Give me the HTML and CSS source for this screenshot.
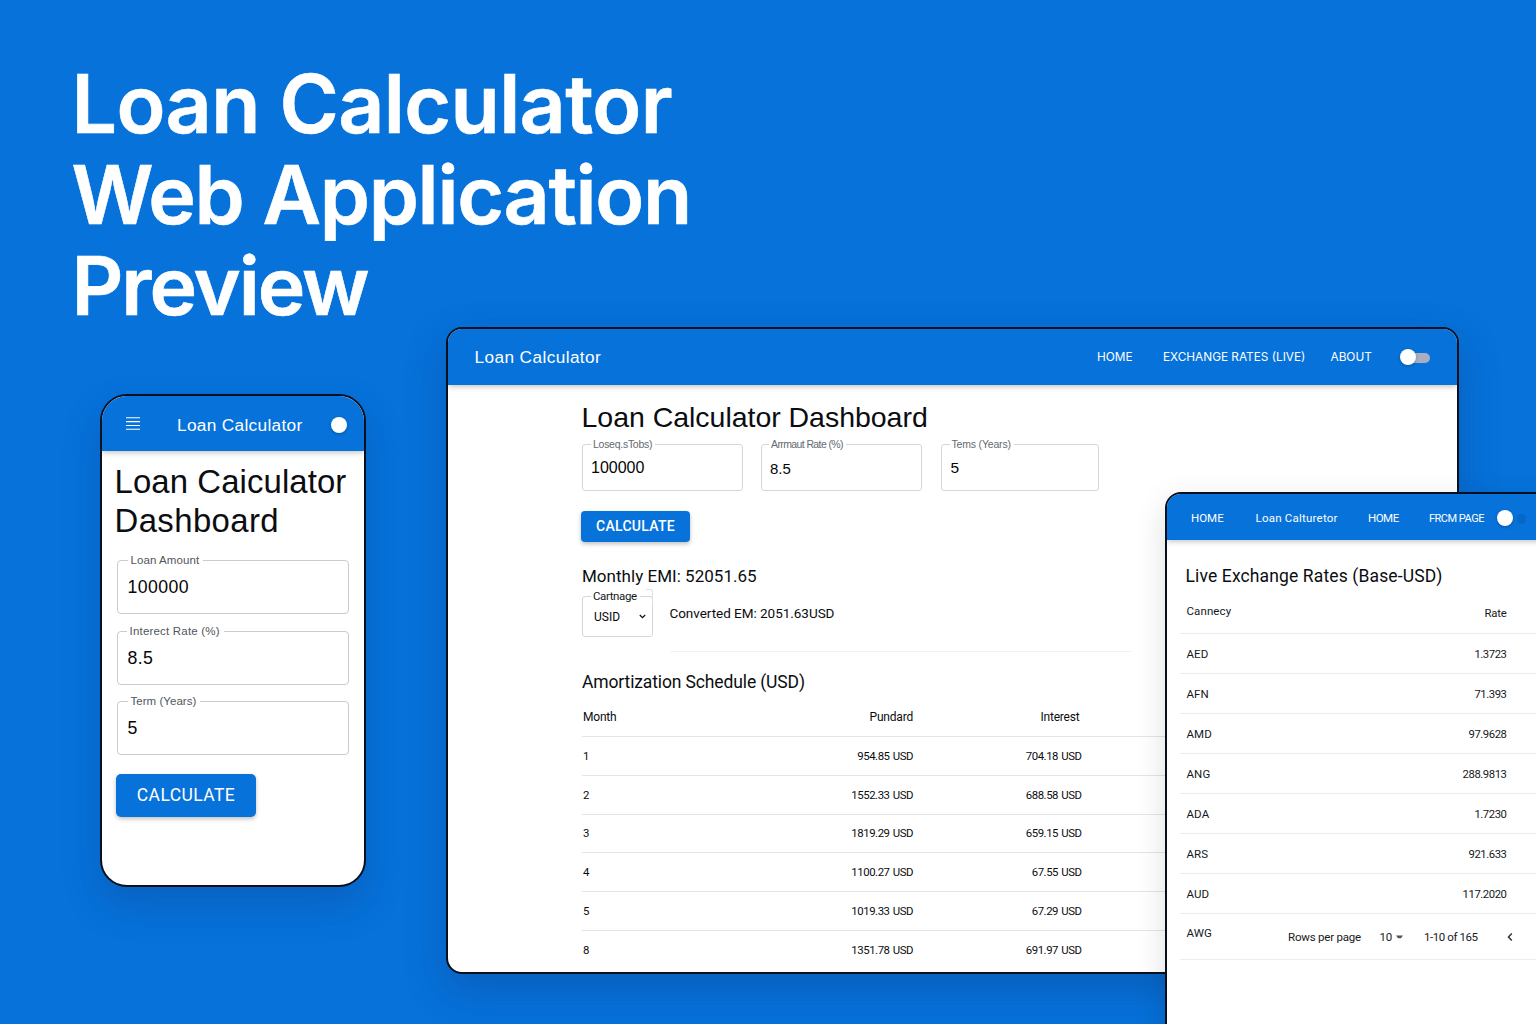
FILE: index.html
```html
<!DOCTYPE html>
<html lang="en">
<head>
<meta charset="utf-8">
<title>Loan Calculator Web Application Preview</title>
<link rel="stylesheet" href="styles.css">
</head>
<body>
<main class="stage">
  <h1 class="title"><span class="t1">Loan Calculator</span><span class="t2">Web Application</span><span class="t3">Preview</span></h1>

  <section class="window phone">
    <header class="bar phone-bar">
      <svg class="menu" width="14" height="13" viewBox="0 0 14 13"><path d="M0 .7h14M0 4.6h14M0 8.5h14M0 12.3h14" stroke="#fff" stroke-width="1.1"/></svg>
      <span class="brand">Loan Calculator</span>
      <span class="knob"></span>
    </header>
    <div class="phone-body">
      <h2 class="phone-title"><span class="p1">Loan Caiculator</span><span class="p2">Dashboard</span></h2>
      <fieldset class="field"><legend class="lg1">Loan Amount</legend><span class="val">100000</span></fieldset>
      <fieldset class="field"><legend class="lg2">Interect Rate (%)</legend><span class="val">8.5</span></fieldset>
      <fieldset class="field"><legend class="lg3">Term (Years)</legend><span class="val">5</span></fieldset>
      <button class="btn btn-phone">CALCULATE</button>
    </div>
  </section>

  <section class="window desktop">
    <header class="bar desk-bar">
      <span class="brand">Loan Calculator</span>
      <nav class="nav"><span class="n-home">HOME</span><span class="n-rates">EXCHANGE RATES (LIVE)</span><span class="n-about">ABOUT</span></nav>
      <span class="switch"><span class="knob"></span></span>
    </header>
    <div class="desk-body">
      <h2 class="desk-title">Loan Calculator Dashboard</h2>
      <div class="fields">
        <fieldset class="field f1"><legend>Loseq.sTobs)</legend><span class="val">100000</span></fieldset>
        <fieldset class="field f2"><legend>Arrmaut Rate (%)</legend><span class="val">8.5</span></fieldset>
        <fieldset class="field f3"><legend>Tems (Years)</legend><span class="val">5</span></fieldset>
      </div>
      <button class="btn btn-desk">CALCULATE</button>
      <p class="emi">Monthly EMI: 52051.65</p>
      <div class="convert">
        <fieldset class="field select"><legend>Cartnage</legend><span class="val">USID</span>
          <svg width="7" height="5" viewBox="0 0 7 5"><path d="M.8 1l2.7 2.6L6.2 1" fill="none" stroke="#111" stroke-width="1.3"/></svg>
        </fieldset>
        <span class="converted">Converted EM: 2051.63USD</span>
      </div>
      <hr class="rule">
      <h3 class="sched-title">Amortization Schedule (USD)</h3>
      <div class="sched">
        <div class="row head"><span>Month</span><span class="h2">Pundard</span><span class="h3">Interest</span></div>
        <div class="row"><span>1</span><span>954.85 USD</span><span>704.18 USD</span></div>
        <div class="row"><span>2</span><span>1552.33 USD</span><span>688.58 USD</span></div>
        <div class="row"><span>3</span><span>1819.29 USD</span><span>659.15 USD</span></div>
        <div class="row"><span>4</span><span>1100.27 USD</span><span>67.55 USD</span></div>
        <div class="row"><span>5</span><span>1019.33 USD</span><span>67.29 USD</span></div>
        <div class="row last"><span>8</span><span>1351.78 USD</span><span>691.97 USD</span></div>
      </div>
    </div>
  </section>

  <section class="window rates">
    <header class="bar rates-bar">
      <span class="r1">HOME</span><span class="r2">Loan Calturetor</span><span class="r3">HOME</span><span class="r4">FRCM PAGE</span>
      <span class="switch dim"><span class="knob"></span></span>
    </header>
    <div class="rates-body">
      <h3 class="rates-title">Live Exchange Rates (Base-USD)</h3>
      <div class="rrow rhead"><span class="cur">Cannecy</span><span class="num">Rate</span></div>
      <div class="rrow"><span>AED</span><span class="num">1.3723</span></div>
      <div class="rrow"><span>AFN</span><span class="num">71.393</span></div>
      <div class="rrow"><span>AMD</span><span class="num">97.9628</span></div>
      <div class="rrow"><span>ANG</span><span class="num">288.9813</span></div>
      <div class="rrow"><span>ADA</span><span class="num">1.7230</span></div>
      <div class="rrow"><span>ARS</span><span class="num">921.633</span></div>
      <div class="rrow"><span>AUD</span><span class="num">117.2020</span></div>
      <div class="rrow rfoot"><span class="awg">AWG</span>
        <div class="pager"><span class="rpp">Rows per page</span><span class="ten">10</span><svg width="7" height="4" viewBox="0 0 7 4"><path d="M0 .5h7L5 3.2H2z" fill="#555"/></svg><span class="range">1-10 of 165</span><svg class="prev" width="6" height="8" viewBox="0 0 6 8"><path d="M4.8.6L1.5 4l3.3 3.4" fill="none" stroke="#333" stroke-width="1.5"/></svg></div>
      </div>
    </div>
  </section>
</main>
</body>
</html>
```
FILE: styles.css
```css
* { box-sizing: border-box; }
body { margin: 0; background: #0672da; }
h1, h2, h3, p { margin: 0; font-weight: 400; }

.stage {
  position: relative;
  width: 1536px;
  height: 1024px;
  overflow: hidden;
  background: #0672da;
  font-family: "Liberation Sans", Arial, sans-serif;
  color: #0b0d10;
}

.title {
  padding: 58px 0 0 71.5px;
  color: #fff;
  font: 600 80.5px/91px Inter, sans-serif;
  -webkit-text-stroke: .6px #fff;
}
.title span { display: block; width: max-content; }
.t1 { letter-spacing: -.62px; }
.t2 { letter-spacing: -1.3px; }
.t3 { letter-spacing: -2.05px; }

/* Device frames */
.window {
  position: absolute;
  border: 2px solid #07101c;
  background: #fff;
  overflow: hidden;
}
.phone {
  left: 99.5px; top: 394px; width: 266px; height: 493px;
  border-radius: 27px;
  box-shadow: 0 18px 36px rgba(20, 50, 120, .26);
}
.desktop {
  left: 446px; top: 327px; width: 1013px; height: 647px;
  border-radius: 16px;
  box-shadow: 0 16px 40px rgba(20, 50, 120, .3);
}
.rates {
  left: 1165px; top: 492px; width: 400px; height: 570px;
  border-radius: 16px;
  box-shadow: 0 10px 32px rgba(0, 0, 0, .13);
}

.bar {
  position: relative;
  display: flex;
  align-items: center;
  background: #0672da;
  color: #fff;
  white-space: nowrap;
  box-shadow: 0 1px 6px rgba(0, 0, 0, .28);
}
.knob {
  flex: none;
  width: 16px;
  height: 16px;
  border-radius: 50%;
  background: #fff;
  box-shadow: 0 1px 3px rgba(0, 0, 0, .25);
}

/* Outlined inputs */
.field {
  display: flex;
  align-items: center;
  margin: 0;
  min-width: 0;
  border: 1px solid #c9cbce;
  border-radius: 4px;
  white-space: nowrap;
}
.field legend { color: #50565d; }
.val { color: #050607; }

.btn {
  display: block;
  padding: 0 0 2px;
  border: 0;
  border-radius: 5px;
  background: #0672da;
  color: #fff;
  box-shadow: 0 2px 4px rgba(0, 0, 0, .25);
}

/* Phone */
.phone-bar { height: 55px; padding: 3px 16px 0 24px; justify-content: space-between; }
.phone-bar .brand { font-size: 17.3px; letter-spacing: .3px; margin-left: 8.5px; }
.phone-bar .menu { margin-top: -3px; }
.phone-bar .knob { margin-top: -1px; }
.phone-body { padding: 12px 15px 0 14px; }
.phone-title { font-size: 32.9px; line-height: 38.5px; margin: 0 0 14px -1px; white-space: nowrap; }
.phone-title span { display: block; }
.p1 { letter-spacing: .1px; }
.p2 { letter-spacing: .4px; }
.phone .field {
  width: 232px;
  height: 60px;
  margin: 0 0 10.5px 1.5px;
  padding: 0 10px 5px 9.5px;
}
.phone .field legend { font-size: 11.5px; line-height: 13px; height: 13px; padding: 0 4px 0 3px; }
.lg1 { letter-spacing: .08px; }
.lg2 { letter-spacing: .2px; margin-left: -1px; }
.lg3 { letter-spacing: .04px; }
.phone .val { font-size: 17.7px; letter-spacing: .4px; }
.btn-phone {
  width: 140px;
  height: 43px;
  margin-top: 18.9px;
  margin-left: .5px;
  padding-bottom: 1px;
  font: 17.5px Roboto, sans-serif;
  letter-spacing: .41px;
}

/* Desktop */
.desk-bar { height: 56px; padding: 0 27px 0 26.5px; }
.desk-bar .brand { flex: 1; font-size: 17.2px; letter-spacing: .42px; }
.nav { display: flex; font: 11.8px Inter, sans-serif; }
.n-home { width: 66px; }
.n-rates { width: 167.5px; }
.n-about { width: 69.5px; }
.switch {
  display: flex;
  align-items: center;
  width: 30px;
  height: 16px;
  position: relative;
}
.switch::before {
  content: "";
  position: absolute;
  left: 6px; top: 4px;
  width: 24px; height: 10px;
  border-radius: 5px;
  background: #a9afc0;
}
.switch .knob { position: relative; }

.desk-body { padding: 15px 0 0 134px; }
.desk-title { font-size: 28.5px; line-height: 34px; margin-left: -.5px; letter-spacing: -.03px; white-space: nowrap; }
.fields { display: flex; margin-top: 5px; }
.desktop .field { height: 52px; padding: 0 8px 2px; border-color: #d4d6d8; border-radius: 3px; }
.desktop .field legend { font-size: 10.5px; line-height: 11px; height: 11px; padding: 0 3px 0 2px; letter-spacing: -.27px; color: #646a70; }
.desktop .f1 { width: 161px; }
.desktop .f2 { width: 161px; margin-left: 18px; }
.desktop .f2 legend { letter-spacing: -.61px; margin-left: -1px; }
.desktop .f3 { width: 158.5px; margin-left: 18.5px; }
.desktop .f3 legend { letter-spacing: -.18px; }
.desktop .val { font-size: 16px; margin-top: -2px; }
.desktop .f2 .val { font-size: 15px; }
.desktop .f3 .val { font-size: 15.5px; margin-left: 1px; }
.btn-desk {
  width: 109px;
  height: 31px;
  margin: 20px 0 0 -1px;
  padding-bottom: 1px;
  border-radius: 4px;
  font: 500 14px Roboto, sans-serif;
  letter-spacing: .28px;
}
.emi { margin: 24px 0 0; font: 17px/20px Roboto, sans-serif; letter-spacing: .03px; }
.convert { display: flex; align-items: center; margin-top: 5px; height: 46px; }
.desktop .select { position: relative; width: 71.4px; height: 46px; padding: 0 6.5px 5px 7px; justify-content: space-between; }
.desktop .select legend { font: 11.5px/11px Roboto, sans-serif; margin-left: 1px; letter-spacing: -.39px; color: #15181b; }
/* short raised corner above the select outline */
.desktop .select::after {
  content: "";
  position: absolute;
  right: -1px; top: -13px;
  width: 6px; height: 14px;
  border: 1px solid #dfe0e2;
  border-width: 1px 1px 0 0;
  border-radius: 0 3px 0 0;
}
.desktop .select .val { margin: 0 0 0 4px; font: 12px Roboto, sans-serif; }
.converted { margin: -2px 0 0 16px; font: 13.5px Roboto, sans-serif; letter-spacing: -.03px; }
.rule { width: 462px; height: 1px; margin: 14px 0 0 88px; border: 0; background: #f3f3f4; }
.sched-title { margin-top: 18px; font: 17.5px/24px Roboto, sans-serif; letter-spacing: -.13px; }
.sched { margin-top: 3px; font: 11.4px Roboto, sans-serif; letter-spacing: -.45px; word-spacing: .8px; }
.row {
  display: grid;
  grid-template-columns: 150px 180px 168.5px;
  align-items: center;
  height: 38.8px;
  padding: 0 0 0 1px;
  border-bottom: 1px solid #e3e4e5;
}
.row span:not(:first-child) { text-align: right; }
.head { height: 40px; font-size: 12px; letter-spacing: -.2px; }
.head .h3 { padding-right: 2px; }
.last { border-bottom: 0; }

/* Exchange rates */
.rates-bar { height: 46px; padding: 2px 0 0 24px; font: 11.5px Roboto, sans-serif; }
.r1 { width: 64.5px; }
.r2 { width: 112.5px; letter-spacing: .22px; }
.r3 { width: 61px; letter-spacing: -.5px; }
.r4 { width: 68.4px; font-size: 11px; letter-spacing: -.5px; }
.dim::before { left: 20px; width: 9px; background: #0667c6; }
.rates-body { padding: 24px 0 0 13px; font: 11.5px Roboto, sans-serif; color: #16191c; }
.rates-title { padding-left: 5.5px; font: 17.5px/24px Roboto, sans-serif; letter-spacing: .13px; color: #0b0d10; }
.rrow {
  display: flex;
  justify-content: space-between;
  align-items: center;
  height: 40px;
  padding: 2px 56.5px 0 6.5px;
  border-bottom: 1px solid #ebeced;
  letter-spacing: .1px;
}
.num { font-size: 11.3px; letter-spacing: -.44px; }
.rhead { height: 45.5px; }
.rhead .num { margin-top: 4px; letter-spacing: -.2px; }
.rfoot { height: 46px; padding-top: 0; padding-right: 0; justify-content: flex-start; }
.awg { width: 101.5px; margin-top: -6px; }
.pager { display: flex; align-items: center; margin-top: 2px; letter-spacing: -.21px; }
.rpp { width: 91.5px; }
.ten { width: 16.5px; }
.range { width: 83px; margin-left: 21px; letter-spacing: -.42px; }
```
